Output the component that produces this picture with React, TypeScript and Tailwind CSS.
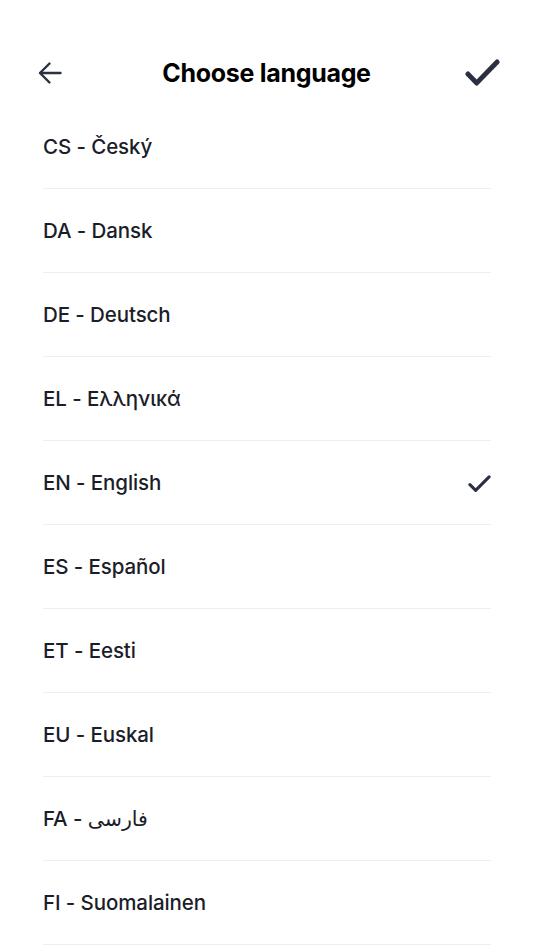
// ── Data ────────────────────────────────────────────────────────

const LANGUAGES = [
  { code: "CS", name: "Český" },
  { code: "DA", name: "Dansk" },
  { code: "DE", name: "Deutsch" },
  { code: "EL", name: "Ελληνικά" },
  { code: "EN", name: "English" },
  { code: "ES", name: "Español" },
  { code: "ET", name: "Eesti" },
  { code: "EU", name: "Euskal" },
  { code: "FA", name: "فارسی", rtl: true },
  { code: "FI", name: "Suomalainen" },
];

const SELECTED = "EN";

// ── Component ──────────────────────────────────────────────────

export default function App() {
  return (
    <div className="min-h-[950px] bg-white font-['Inter','DejaVu_Sans',sans-serif] text-[#1b1d29]">
      {/* Header */}
      <div className="flex h-[105px] items-start justify-between pl-[38px] pr-[33px] pt-[55px]">
        <button type="button" className="flex h-[36px] w-[24px] items-center justify-center">
          <BackIcon />
        </button>
        <h1 className="ml-[6px] text-[25px] font-bold leading-[36px] tracking-[-0.3px] text-black">
          Choose language
        </h1>
        <button type="button" className="flex h-[36px] w-[36px] items-center justify-center">
          <CheckIcon className="h-[28px] w-[35px]" strokeWidth={5} />
        </button>
      </div>

      {/* List */}
      <ul className="px-[43px]">
        {LANGUAGES.map((lang) => (
          <li
            key={lang.code}
            className="flex h-[84px] items-center justify-between border-b border-[#eceef4] pt-[2px]"
          >
            <span className="text-[20.5px] font-[550] tracking-[-0.1px]">
              {lang.code} -{" "}
              <bdi className={lang.rtl ? "font-normal" : ""}>{lang.name}</bdi>
            </span>
            {lang.code === SELECTED && (
              <CheckIcon className="h-[18px] w-[23px]" strokeWidth={4.8} />
            )}
          </li>
        ))}
      </ul>
    </div>
  );
}

// ── Sub-components ─────────────────────────────────────────────

function BackIcon() {
  return (
    <svg
      viewBox="0 0 24 24"
      className="h-[24px] w-[24px]"
      fill="none"
      stroke="#2b2f42"
      strokeWidth={2.4}
      strokeLinecap="round"
      strokeLinejoin="round"
    >
      <path d="M22.5 12H2.5" />
      <path d="M11.5 2.5L2 12l9.5 9.5" />
    </svg>
  );
}

function CheckIcon({
  className,
  strokeWidth,
}: {
  className?: string;
  strokeWidth: number;
}) {
  return (
    <svg
      viewBox="0 0 36 28"
      className={className}
      fill="none"
      stroke="#2b2f42"
      strokeWidth={strokeWidth}
      strokeLinecap="round"
      strokeLinejoin="round"
      preserveAspectRatio="none"
    >
      <path d="M3 15 L12 24 L33 3" />
    </svg>
  );
}
